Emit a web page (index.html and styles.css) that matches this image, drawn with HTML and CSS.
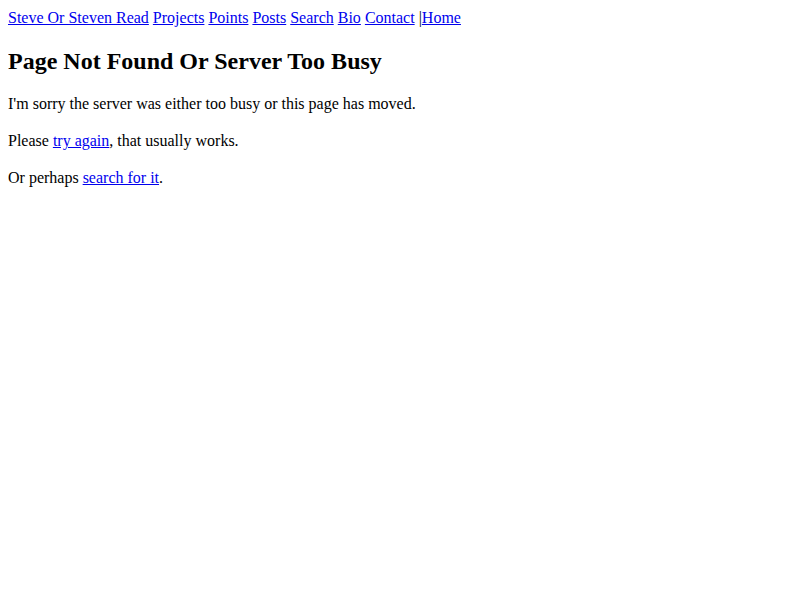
FILE: index.html
```html
<!DOCTYPE html>
<html>
<head>
<meta charset="utf-8">
<title>Page Not Found</title>
<link rel="stylesheet" href="styles.css">
</head>
<body class="page">
<div class="nav"><a href="#">Steve Or Steven Read</a> <a href="#">Projects</a> <a href="#">Points</a> <a href="#">Posts</a> <a href="#">Search</a> <a href="#">Bio</a> <a href="#">Contact</a> |<a href="#">Home</a></div>
<h2 class="title">Page Not Found Or Server Too Busy</h2>
<p class="text">I'm sorry the server was either too busy or this page has moved.</p>
<p class="text">Please <a href="#">try again</a>, that usually works.</p>
<p class="text">Or perhaps <a href="#">search for it</a>.</p>
</body>
</html>
```

FILE: styles.css
```css
.page {
  margin: 9px 8px 8px;
  font-family: "Liberation Serif", "Times New Roman", serif;
  font-size: 16px;
  line-height: 18px;
  color: #000;
  background: #fff;
}
.page a {
  color: #0000ee;
  text-decoration: underline;
}
.title {
  font-size: 24px;
  line-height: 28px;
  font-weight: bold;
  margin: 20px 0 20px;
}
.text {
  margin: 19px 0;
}
```
